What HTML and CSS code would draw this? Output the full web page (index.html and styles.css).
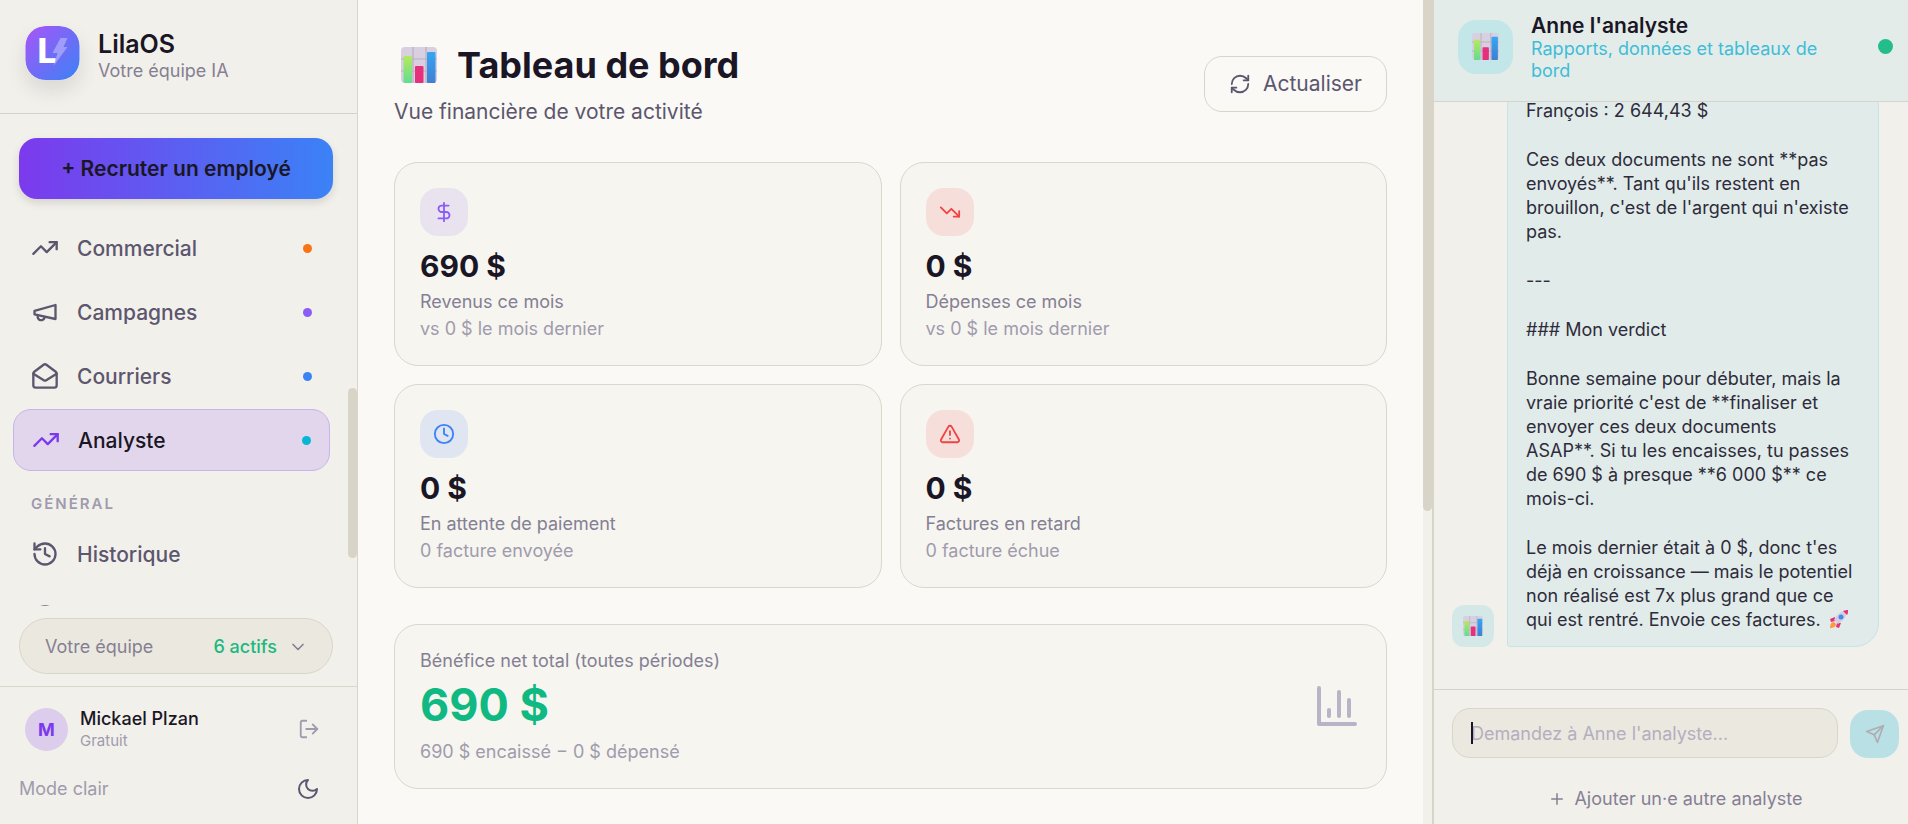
FILE: index.html
```html
<!DOCTYPE html>
<html lang="fr">
<head>
  <meta charset="UTF-8">
  <meta name="viewport" content="width=device-width, initial-scale=1">
  <title>LilaOS - Tableau de bord</title>
  <link rel="stylesheet" href="styles.css">
</head>
<body>
  <!-- Shared symbols -->
  <svg class="defs" aria-hidden="true">
    <defs>
      <linearGradient id="logoGrad" x1="0" y1="0" x2="1" y2="1">
        <stop offset="0" stop-color="#a855f7"/>
        <stop offset="1" stop-color="#3b82f6"/>
      </linearGradient>
      <linearGradient id="barGreen" x1="0" y1="0" x2="0" y2="1">
        <stop offset="0" stop-color="#b4ea5c"/>
        <stop offset="1" stop-color="#62dc92"/>
      </linearGradient>
      <linearGradient id="barBlue" x1="0" y1="0" x2="0" y2="1">
        <stop offset="0" stop-color="#35a6f5"/>
        <stop offset="1" stop-color="#3f7fd0"/>
      </linearGradient>
      <symbol id="chart-emoji" viewBox="0 0 36 36">
        <rect width="36" height="36" rx="4" fill="#d8d0e0"/>
        <path d="M12 0v36M25 0v36M0 12h36M0 24h36" stroke="#b8b0c2" stroke-width="1.2"/>
        <rect x="2.5" y="9" width="8.5" height="27" rx="1" fill="url(#barGreen)"/>
        <rect x="14" y="19" width="8.5" height="17" rx="1" fill="#e5317c"/>
        <rect x="26" y="5" width="8.5" height="31" rx="1" fill="url(#barBlue)"/>
      </symbol>
      <symbol id="trend-up" viewBox="0 0 24 24">
        <path d="m22 7-8.500 8.500-5-5L2 17"/><path d="M16 7h6v6"/>
      </symbol>
    </defs>
  </svg>

  <div class="app">
    <aside class="sidebar">
      <header class="brand">
        <svg class="logo" viewBox="0 0 54 54" aria-hidden="true">
          <rect width="54" height="54" rx="20" fill="url(#logoGrad)"/>
          <text class="logo-letter" x="12" y="37">L</text>
          <path d="M35 12h7l-4 9h4L28 40l4-13h-5z" fill="#a9a4fb" opacity=".85"/>
        </svg>
        <div class="brand-text">
          <div class="brand-name">LilaOS</div>
          <div class="brand-sub">Votre équipe IA</div>
        </div>
      </header>

      <button class="hire" type="button">+ Recruter un employé</button>

      <nav class="nav">
        <a class="nav-item" href="#">
          <svg class="icon"><use href="#trend-up"/></svg>
          <span>Commercial</span><i class="dot orange"></i>
        </a>
        <a class="nav-item" href="#">
          <svg class="icon" viewBox="0 0 24 24"><path d="m3 11 18-5v12L3 14v-3z"/><path d="M11.600 16.800a3 3 0 1 1-5.800-1.600"/></svg>
          <span>Campagnes</span><i class="dot violet"></i>
        </a>
        <a class="nav-item" href="#">
          <svg class="icon" viewBox="0 0 24 24"><path d="M21.200 8.400c.5.380.8.970.8 1.600v10a2 2 0 0 1-2 2H4a2 2 0 0 1-2-2V10a2 2 0 0 1 .8-1.600l8-6a2 2 0 0 1 2.400 0l8 6Z"/><path d="m22 10-8.970 5.700a1.940 1.940 0 0 1-2.060 0L2 10"/></svg>
          <span>Courriers</span><i class="dot blue"></i>
        </a>
        <a class="nav-item active" href="#">
          <svg class="icon"><use href="#trend-up"/></svg>
          <span>Analyste</span><i class="dot cyan"></i>
        </a>
        <h2 class="nav-title">GÉNÉRAL</h2>
        <a class="nav-item" href="#">
          <svg class="icon" viewBox="0 0 24 24"><path d="M3 12a9 9 0 1 0 9-9 9.750 9.750 0 0 0-6.740 2.740L3 8"/><path d="M3 3v5h5"/><path d="M12 7v5l4 2"/></svg>
          <span>Historique</span>
        </a>
        <a class="nav-item" href="#" aria-label="Aide">
          <svg class="icon" viewBox="0 0 24 24"><circle cx="12" cy="12" r="10"/><path d="M12 17h.01"/></svg>
        </a>
      </nav>
      <div class="nav-thumb"></div>

      <button class="team" type="button">
        <span>Votre équipe</span>
        <span class="team-count">6 actifs</span>
        <svg class="icon small" viewBox="0 0 24 24"><path d="m6 9 6 6 6-6"/></svg>
      </button>

      <footer class="account">
        <div class="user">
          <div class="avatar">M</div>
          <div>
            <div class="user-name">Mickael Plzan</div>
            <div class="user-plan">Gratuit</div>
          </div>
          <button class="icon-btn" type="button" aria-label="Déconnexion">
            <svg class="icon medium" viewBox="0 0 24 24"><path d="M9 21H5a2 2 0 0 1-2-2V5a2 2 0 0 1 2-2h4"/><path d="m16 17 5-5-5-5"/><path d="M21 12H9"/></svg>
          </button>
        </div>
        <div class="theme">
          <span>Mode clair</span>
          <button class="icon-btn dark" type="button" aria-label="Changer de thème">
            <svg class="icon moon" viewBox="0 0 24 24"><path d="M12 3a6 6 0 0 0 9 9 9 9 0 1 1-9-9Z"/></svg>
          </button>
        </div>
      </footer>
    </aside>

    <main class="main">
      <div class="content">
        <header class="page-head">
          <div>
            <h1><svg class="emoji large" aria-hidden="true"><use href="#chart-emoji"/></svg>Tableau de bord</h1>
            <p>Vue financière de votre activité</p>
          </div>
          <button class="refresh" type="button">
            <svg class="icon medium" viewBox="0 0 24 24"><path d="M3 12a9 9 0 0 1 9-9 9.750 9.750 0 0 1 6.740 2.740L21 8"/><path d="M21 3v5h-5"/><path d="M21 12a9 9 0 0 1-9 9 9.750 9.750 0 0 1-6.740-2.740L3 16"/><path d="M8 16H3v5"/></svg>
            Actualiser
          </button>
        </header>

        <section class="stats">
          <article class="card">
            <div class="badge purple"><svg class="icon medium" viewBox="0 0 24 24"><path d="M12 2v20"/><path d="M17 5H9.500a3.500 3.500 0 0 0 0 7h5a3.500 3.500 0 0 1 0 7H6"/></svg></div>
            <div class="value">690 $</div>
            <div class="label">Revenus ce mois</div>
            <div class="hint">vs 0 $ le mois dernier</div>
          </article>
          <article class="card">
            <div class="badge red"><svg class="icon medium" viewBox="0 0 24 24"><path d="m22 17-8.500-8.500-5 5L2 7"/><path d="M16 17h6v-6"/></svg></div>
            <div class="value">0 $</div>
            <div class="label">Dépenses ce mois</div>
            <div class="hint">vs 0 $ le mois dernier</div>
          </article>
          <article class="card">
            <div class="badge blue"><svg class="icon medium" viewBox="0 0 24 24"><circle cx="12" cy="12" r="10"/><path d="M12 6v6l4 2"/></svg></div>
            <div class="value">0 $</div>
            <div class="label">En attente de paiement</div>
            <div class="hint">0 facture envoyée</div>
          </article>
          <article class="card">
            <div class="badge red"><svg class="icon medium" viewBox="0 0 24 24"><path d="m21.730 18-8-14a2 2 0 0 0-3.480 0l-8 14A2 2 0 0 0 4 21h16a2 2 0 0 0 1.730-3Z"/><path d="M12 9v4"/><path d="M12 17h.01"/></svg></div>
            <div class="value">0 $</div>
            <div class="label">Factures en retard</div>
            <div class="hint">0 facture échue</div>
          </article>
        </section>

        <section class="card net">
          <div>
            <div class="label">Bénéfice net total (toutes périodes)</div>
            <div class="total">690 $</div>
            <div class="hint">690 $ encaissé − 0 $ dépensé</div>
          </div>
          <svg class="icon big" viewBox="0 0 24 24"><path d="M3 3v18h18"/><path d="M18 17V9"/><path d="M13 17V5"/><path d="M8 17v-3"/></svg>
        </section>
      </div>
      <div class="main-track"><div class="main-thumb"></div></div>
    </main>

    <aside class="chat">
      <header class="chat-head">
        <div class="chat-icon"><svg class="emoji"><use href="#chart-emoji"/></svg></div>
        <div class="chat-who">
          <h2>Anne l'analyste</h2>
          <p>Rapports, données et tableaux de bord</p>
        </div>
        <i class="status"></i>
      </header>

      <div class="messages">
        <div class="msg-avatar"><svg class="emoji tiny"><use href="#chart-emoji"/></svg></div>
        <div class="bubble">
          <p>François : 2 644,43 $</p>
          <p>Ces deux documents ne sont **pas envoyés**. Tant qu'ils restent en brouillon, c'est de l'argent qui n'existe pas.</p>
          <p>---</p>
          <p>### Mon verdict</p>
          <p>Bonne semaine pour débuter, mais la vraie priorité c'est de **finaliser et envoyer ces deux documents<br>ASAP**. Si tu les encaisses, tu passes<br>de 690 $ à presque **6 000 $** ce<br>mois-ci.</p>
          <p>Le mois dernier était à 0 $, donc t'es déjà en croissance — mais le potentiel non réalisé est 7x plus grand que ce qui est rentré. Envoie ces factures.
            <svg class="rocket" viewBox="0 0 20 20" aria-hidden="true">
              <path d="M6 8 1 10l1 3 4-1zM12 14l-2 5-3-1 1-4z" fill="#e5317c"/>
              <path d="M5 13c-3 0-4 3-4 6 3 0 6-1 6-4z" fill="#ff9a3d"/>
              <path d="M5 11C8 5 12 2 17 2c1 5-2 9-8 13z" fill="#d5cde0"/>
              <path d="M14 2c2-1 4-1 5-1 0 2 0 4-1 5z" fill="#e5317c"/>
              <circle cx="12" cy="8" r="2.500" fill="#3f8fe8"/>
            </svg></p>
        </div>
      </div>

      <footer class="composer">
        <form class="ask">
          <div class="field">
            <input type="text" placeholder="Demandez à Anne l'analyste..." aria-label="Message">
            <span class="caret"></span>
          </div>
          <button class="send" type="submit" aria-label="Envoyer">
            <svg class="icon small" viewBox="0 0 24 24"><path d="m22 2-7 20-4-9-9-4Z"/><path d="M22 2 11 13"/></svg>
          </button>
        </form>
        <button class="add" type="button">
          <svg class="icon plus" viewBox="0 0 24 24"><path d="M5 12h14"/><path d="M12 5v14"/></svg>
          Ajouter un·e autre analyste
        </button>
      </footer>
    </aside>
  </div>
</body>
</html>
```
FILE: styles.css
```css
* {
  box-sizing: border-box;
  margin: 0;
  padding: 0;
}

body {
  font-family: Inter, "Liberation Sans", sans-serif;
  font-size: 18px;
  line-height: 24px;
  color: #1a1625;
  background: #faf9f5;
}

button, input {
  font: inherit;
  color: inherit;
  border: none;
  background: none;
}

a {
  color: inherit;
  text-decoration: none;
}

.defs {
  position: absolute;
  width: 0;
  height: 0;
}

.app {
  display: flex;
  height: 100vh;
  overflow: hidden;
}

.icon {
  width: 28px;
  height: 28px;
  flex-shrink: 0;
  fill: none;
  stroke: currentColor;
  stroke-width: 2;
  stroke-linecap: round;
  stroke-linejoin: round;
}

.icon.plus { width: 18px; height: 18px; }
.icon.small { width: 20px; height: 20px; }
.icon.medium { width: 22px; height: 22px; }
.icon.moon { width: 24px; height: 24px; }
.icon.big { width: 48px; height: 48px; color: #b8b3c6; }

.emoji { width: 27px; height: 27px; }
.emoji.large { width: 36px; height: 36px; }
.emoji.tiny { width: 20px; height: 20px; }

/* Sidebar */
.sidebar {
  position: relative;
  display: flex;
  flex-direction: column;
  flex-shrink: 0;
  width: 358px;
  background: #f2f0eb;
  border-right: 1px solid #d9d5c9;
}

.brand {
  display: flex;
  align-items: center;
  gap: 18px;
  height: 114px;
  padding: 0 25px 7px;
  border-bottom: 1px solid #d5d3cb;
}

.logo {
  width: 55px;
  height: 54px;
  border-radius: 20px;
  box-shadow: 0 10px 20px rgba(0, 0, 0, 0.1);
}

.logo-letter {
  font-size: 34px;
  font-weight: 800;
  fill: #fff;
}

.brand-text {
  padding-top: 6px;
}

.brand-name {
  font-size: 25px;
  font-weight: 600;
  line-height: 30px;
}

.brand-sub {
  color: #857f94;
}

.hire {
  height: 61px;
  margin: 24px 24px 18px 19px;
  border-radius: 18px;
  font-size: 21px;
  font-weight: 600;
  background: linear-gradient(90deg, #7c3aed, #3b82f6);
  box-shadow: 0 4px 8px rgba(0, 0, 0, 0.12);
}

.nav {
  display: flex;
  flex-direction: column;
  gap: 2px;
  flex: 1;
  min-height: 0;
  overflow: hidden;
  padding: 0 27px 0 13px;
}

.nav-item {
  display: flex;
  align-items: center;
  gap: 18px;
  flex-shrink: 0;
  height: 62px;
  padding: 0 18px;
  border-radius: 18px;
  font-size: 21px;
  font-weight: 500;
  color: #5c566e;
}

.nav-item span {
  padding-top: 2px;
}

.nav-item.active {
  color: #1a1625;
  background: #e2d6ec;
  border: 1px solid #c9b3ec;
}

.nav-item.active .icon {
  color: #7c3aed;
}

.dot {
  width: 9px;
  height: 9px;
  margin-left: auto;
  border-radius: 50%;
}

.dot.orange { background: #f97316; }
.dot.violet { background: #8b5cf6; }
.dot.blue { background: #3b82f6; }
.dot.cyan { background: #06b6d4; }

.nav-title {
  padding: 19px 18px 5px;
  font-size: 15px;
  font-weight: 600;
  letter-spacing: 2px;
  color: #a09bad;
}

.nav-thumb {
  position: absolute;
  top: 388px;
  right: 0;
  width: 9px;
  height: 170px;
  border-radius: 5px;
  background: #d9d4c8;
}

.team {
  display: flex;
  align-items: center;
  height: 56px;
  margin: 12px 24px 12px 19px;
  padding: 2px 24px 0 25px;
  border: 1px solid #d9d5c9;
  border-radius: 28px;
  background: #ebe8df;
  color: #857f94;
}

.team-count {
  margin: 0 11px 0 auto;
  font-weight: 500;
  color: #1db87f;
}

.account {
  height: 138px;
  padding: 20px 35px 0 19px;
  border-top: 1px solid #d9d5c9;
}

.user {
  display: flex;
  align-items: center;
  gap: 12px;
  padding-left: 6px;
}

.avatar {
  width: 43px;
  height: 43px;
  border-radius: 50%;
  background: #dccdec;
  color: #7c3aed;
  font-weight: 700;
  line-height: 43px;
  text-align: center;
}

.user-name {
  font-weight: 500;
}

.user-plan {
  font-size: 15px;
  line-height: 20px;
  color: #a09bad;
}

.icon-btn {
  display: flex;
  margin-left: auto;
  padding: 2px;
  color: #a09bad;
}

.icon-btn.dark {
  color: #5c566e;
}

.theme {
  display: flex;
  align-items: center;
  margin-top: 24px;
  color: #a09bad;
}

/* Dashboard */
.main {
  display: flex;
  flex: 1;
  min-width: 0;
}

.content {
  flex: 1;
  padding: 42px 36px;
}

.page-head {
  display: flex;
  align-items: center;
  justify-content: space-between;
  margin-bottom: 36px;
}

.page-head h1 {
  display: flex;
  align-items: center;
  gap: 20px;
  padding-left: 7px;
  font-size: 36px;
  font-weight: 700;
  line-height: 46px;
}

.page-head p {
  padding-top: 10px;
  font-size: 21px;
  line-height: 28px;
  color: #5c566e;
}

.refresh {
  display: flex;
  align-items: center;
  gap: 12px;
  height: 56px;
  padding: 0 24px;
  border: 1px solid #d9d5c9;
  border-radius: 18px;
  font-size: 21px;
  color: #5c566e;
}

.stats {
  display: grid;
  grid-template-columns: 1fr 1fr;
  gap: 18px;
}

.card {
  padding: 25px 25px 23px;
  border: 1px solid #d9d8cc;
  border-radius: 24px;
  background: #f6f5f0;
}

.badge {
  display: flex;
  align-items: center;
  justify-content: center;
  width: 48px;
  height: 48px;
  margin-bottom: 12px;
  border-radius: 18px;
}

.badge.purple { background: #e9e3f0; color: #8b5cf6; }
.badge.red { background: #f6dfdb; color: #ef4444; }
.badge.blue { background: #dfe5f1; color: #3b82f6; }

.value {
  margin-bottom: 4px;
  font-size: 30px;
  font-weight: 700;
  line-height: 36px;
}

.label {
  line-height: 27px;
  color: #857f94;
}

.hint {
  line-height: 27px;
  color: #a09bad;
}

.net {
  display: flex;
  align-items: center;
  justify-content: space-between;
  margin-top: 36px;
  padding-top: 22px;
}

.total {
  margin: 6px 0 8px;
  font-size: 45px;
  font-weight: 700;
  line-height: 50px;
  color: #10b981;
}

.main-track {
  width: 9px;
  background: #f2f0eb;
}

.main-thumb {
  height: 62%;
  border-radius: 0 0 5px 5px;
  background: #d9d4c8;
}

/* Chat */
.chat {
  display: flex;
  flex-direction: column;
  flex-shrink: 0;
  width: 476px;
  background: #f2f0eb;
  border-left: 2px solid #d9d4c8;
}

.chat-head {
  display: flex;
  align-items: center;
  gap: 18px;
  flex-shrink: 0;
  height: 102px;
  padding: 0 15px 8px 24px;
  background: #e3ece8;
  border-bottom: 1px solid #d5d3cb;
}

.chat-icon {
  display: flex;
  align-items: center;
  justify-content: center;
  width: 55px;
  height: 54px;
  border-radius: 18px;
  background: #c3e6e8;
}

.chat-who {
  flex: 1;
  padding-top: 2px;
}

.chat-head h2 {
  font-size: 21px;
  font-weight: 600;
  line-height: 24px;
}

.chat-head p {
  line-height: 22px;
  color: #3fbdd8;
}

.status {
  width: 15px;
  height: 15px;
  border-radius: 50%;
  background: #23bd8c;
}

/* The conversation stays scrolled to its last line */
.messages {
  display: flex;
  align-items: flex-end;
  gap: 13px;
  flex: 1;
  min-height: 0;
  overflow: hidden;
  padding: 0 29px 42px 18px;
}

.msg-avatar {
  display: flex;
  align-items: center;
  justify-content: center;
  flex-shrink: 0;
  width: 42px;
  height: 42px;
  border-radius: 12px;
  background: #d5e8e8;
}

.bubble {
  flex: 1;
  padding: 15px 18px 14px;
  border: 1px solid #c4e5e7;
  border-radius: 24px 24px 24px 3px;
  background: #e0ebea;
  color: #2f2b3a;
}

.bubble p + p {
  margin-top: 25px;
}

.rocket {
  width: 20px;
  height: 20px;
  margin-left: 3px;
  vertical-align: -3px;
}

.composer {
  flex-shrink: 0;
  height: 135px;
  padding: 18px 9px 0 18px;
  border-top: 1px solid #d5d3cb;
}

.ask {
  display: flex;
  align-items: flex-end;
  gap: 12px;
}

.field {
  position: relative;
  display: flex;
  flex: 1;
}

.field input {
  flex: 1;
  min-width: 0;
  height: 50px;
  padding: 0 18px;
  border: 1px solid #d9d5c9;
  border-radius: 18px;
  background: #ebe8df;
  outline: none;
}

.field input::placeholder {
  color: #b4aebf;
}

/* Text cursor over the empty field, gone once it has focus */
.caret {
  position: absolute;
  top: 14px;
  left: 19px;
  width: 2px;
  height: 22px;
  background: #1a1625;
}

.field input:focus + .caret {
  display: none;
}

.send {
  display: flex;
  align-items: center;
  justify-content: center;
  width: 49px;
  height: 48px;
  border-radius: 18px;
  background: #b9e1e5;
  color: #adadb3;
}

.add {
  display: flex;
  align-items: center;
  justify-content: center;
  gap: 8px;
  width: 100%;
  margin-top: 29px;
  color: #857f94;
}
```
